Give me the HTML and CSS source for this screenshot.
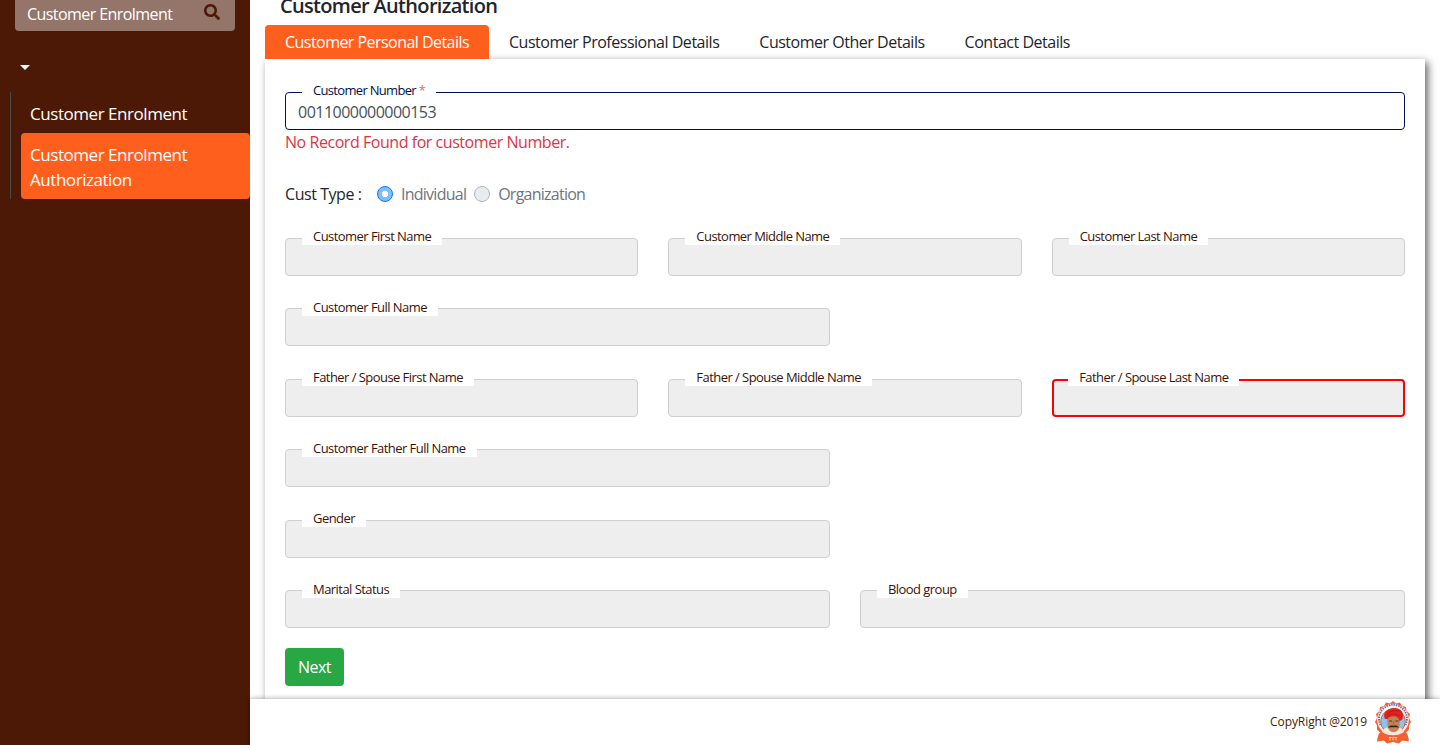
FILE: index.html
```
<!DOCTYPE html>
<html lang="en">
<head>
<meta charset="utf-8">
<title>Customer Authorization</title>
<link rel="stylesheet" href="styles.css">
</head>
<body>
<div class="app">
  <aside class="sidebar">
    <div class="search">
      <span class="search-text">Customer Enrolment</span>
      <svg class="search-icon" viewBox="0 0 512 512"><path d="M505 442.700L405.300 343c-4.500-4.500-10.600-7-17-7H372c27.600-35.300 44-79.700 44-128C416 93.100 322.900 0 208 0S0 93.100 0 208s93.100 208 208 208c48.300 0 92.700-16.400 128-44v16.300c0 6.400 2.500 12.500 7 17l99.700 99.700c9.400 9.400 24.600 9.400 33.900 0l28.300-28.300c9.400-9.400 9.400-24.600.1-34zM208 336c-70.700 0-128-57.200-128-128 0-70.700 57.200-128 128-128 70.700 0 128 57.200 128 128 0 70.700-57.200 128-128 128z"/></svg>
    </div>
    <div class="caret"></div>
    <nav class="menu">
      <a class="menu-item">Customer Enrolment</a>
      <a class="menu-item active">Customer Enrolment Authorization</a>
    </nav>
  </aside>
  <div class="main">
    <main class="content">
      <h5 class="title">Customer Authorization</h5>
      <div class="tabs">
        <a class="tab active"><span>Customer Personal Details</span></a>
        <a class="tab"><span>Customer Professional Details</span></a>
        <a class="tab"><span>Customer Other Details</span></a>
        <a class="tab"><span>Contact Details</span></a>
      </div>
      <section class="card">
        <div class="field number"><label>Customer Number <i class="req">*</i></label><span class="value">0011000000000153</span></div>
        <div class="error">No Record Found for customer Number.</div>
        <div class="types">
          <span class="types-label">Cust Type :</span>
          <span class="radio on"></span><span class="radio-text">Individual</span>
          <span class="radio"></span><span class="radio-text">Organization</span>
        </div>
        <div class="rows">
          <div class="row thirds">
            <div class="field"><label>Customer First Name</label></div>
            <div class="field"><label>Customer Middle Name</label></div>
            <div class="field"><label>Customer Last Name</label></div>
          </div>
          <div class="row halves"><div class="field"><label>Customer Full Name</label></div></div>
          <div class="row thirds">
            <div class="field"><label>Father / Spouse First Name</label></div>
            <div class="field"><label>Father / Spouse Middle Name</label></div>
            <div class="field invalid"><label>Father / Spouse Last Name</label></div>
          </div>
          <div class="row halves"><div class="field"><label>Customer Father Full Name</label></div></div>
          <div class="row halves"><div class="field"><label>Gender</label></div></div>
          <div class="row halves">
            <div class="field"><label>Marital Status</label></div>
            <div class="field"><label>Blood group</label></div>
          </div>
        </div>
        <button class="next">Next</button>
      </section>
    </main>
    <footer class="footer">
      <span class="copy">CopyRight @2019</span>
      <svg class="logo" viewBox="0 0 38 44">
        <path d="M19 1l3 2.500 4-1 2 3.500 4 1 .5 4 3.500 3-1 4 2 4-2 3.500 0 4-3 3 1 3 2 6-7-1-3 3-6-1.500-6 1.500-3-3-7 1 2-6 1-3-3-3 0-4-2-3.500 2-4-1-4 3.500-3 .5-4 4-1 2-3.500 4 1z" fill="#f4602e"/>
        <circle cx="19" cy="19.500" r="15.800" fill="#fff3ee"/>
        <path d="M6.500 25A14 14 0 1 1 31.500 25" fill="none" stroke="#6d70ae" stroke-width="1.900" stroke-dasharray="1.500 .9"/>
        <circle cx="19" cy="21.500" r="12.300" fill="#86c5ef" stroke="#ef5a2a"/>
        <path d="M8 32c1-4 5-5 11-5s10 1 11 5c-5 4-17 4-22 0z" fill="#f7e6dc"/>
        <path d="M13 16h13l-.5 11c-2 7-9.500 7-12 0z" fill="#c18459"/>
        <path d="M11 19c-3-6 2-11 9-11 8 0 11 6 8 12l-2.500 1c-1-6-9-6-12-2z" fill="#df251d"/>
        <path d="M12 15c4-4 8-5 14-4M13 17c4-4 8-4 13-1" fill="none" stroke="#b5171a" stroke-width=".8"/>
        <path d="M15 21h3m3.500 0h3" stroke="#4b2b1e" stroke-width=".9"/>
        <path d="M19.700 21v4" stroke="#a66439" stroke-width="1"/>
        <path d="M14 27.500c1.500-2 4-2.500 5.500-1.500 1.500-1 4-.5 5.500 1.500-2.500-.4-8-.4-11 0z" fill="#30211e"/>
        <path d="M5 33c3 2 6 2 9 2s4 1.500 5 1.500 2-1.500 5-1.500 6 0 9-2l2 7c-5-1-7 0-9 2l-7-1-7 1c-2-2-4-3-9-2z" fill="#f4602e"/>
        <path d="M15 37.500h8M16 37.500v3m3-3v3m3-3v3" stroke="#ffd4bd" stroke-width=".9"/>
      </svg>
    </footer>
  </div>
</div>
</body>
</html>
```
FILE: styles.css
```
* { box-sizing: border-box; }
body { margin: 0; font: 400 16px/24px "Open Sans", "Noto Sans", sans-serif; color: #212529; background: #fff; overflow: hidden; }
.app { display: flex; height: 745px; }
.sidebar { width: 250px; flex: none; background: #4b1905; color: #fff; }
.search { display: flex; align-items: center; justify-content: space-between; height: 38px; margin: -7px 15px 0; padding: 3px 15px 0 12px; border-radius: 4px; background: #94756a; font-size: 16px; letter-spacing: -.57px; white-space: nowrap; }
.search-icon { width: 16px; height: 16px; fill: #4b1905; margin-top: -3px; }
.caret { width: 0; margin: 34px 0 0 20px; border: 5px solid transparent; border-top-color: #fff; border-bottom: 0; }
.menu { margin: 22px 0 0 10px; padding-left: 10px; border-left: 1px solid #4b4b4b; font-size: 17px; line-height: 25px; letter-spacing: -.45px; }
.menu-item { display: block; padding: 9px 50px 7px 9px; white-space: nowrap; }
.menu-item.active { padding: 9px 40px 7px 9px; border-radius: 4px; background: #ff5f1d; white-space: normal; }
.main { flex: 1; display: flex; flex-direction: column; min-width: 0; }
.content { flex: 1; min-height: 0; overflow: hidden; padding: 0 15px; }
.title { margin: -6px 0 0 15px; font-size: 20px; line-height: 24px; font-weight: 600; letter-spacing: -.68px; }
.tabs { display: flex; height: 34px; margin-top: 7px; font-size: 16px; line-height: 35px; letter-spacing: -.48px; }
.tab { padding: 0 20px; white-space: nowrap; }
.tab.active { width: 224px; background: #ff5f1d; color: #fff; letter-spacing: -.54px; border-radius: 4px 4px 0 0; }
.card { height: 700px; padding: 33px 20px 0; background: #fff; box-shadow: 3px 3px 8px rgba(0,0,0,.6); }
.field { position: relative; height: 38px; border: 1px solid #cfcfcf; border-radius: 4px; background: #eee; }
.field label { position: absolute; left: 16px; top: -10.400px; padding: 0 11px; background: #fff; color: #3d1105; font-size: 13px; line-height: 17px; letter-spacing: -.55px; white-space: nowrap; }
.field.invalid { border: 2px solid #f00; }
.field.invalid label { left: 14.500px; top: -11.400px; }
.field.number { display: flex; align-items: center; padding: 0 12px; border-color: #00104d; background: #fff; }
.field.number label { top: -11px; color: #00104d; letter-spacing: -.68px; }
.req { color: #f06666; font-style: normal; }
.value { margin-top: 1px; color: #495057; letter-spacing: -.52px; }
.error { color: #dc3545; letter-spacing: -.45px; }
.types { display: flex; align-items: center; margin-top: 28px; letter-spacing: -.75px; }
.types-label { width: 92px; letter-spacing: -.45px; }
.radio { width: 16px; height: 16px; border: 1px solid #adb5bd; border-radius: 50%; background: #e9ecef; }
.radio.on { border-color: #007bff; background: radial-gradient(#fff 0 3px, #80bdff 3.500px); }
.radio-text { margin: 0 8px; color: #6c757d; }
.rows { display: grid; row-gap: 32.450px; margin-top: 31.800px; }
.row { display: grid; column-gap: 30px; }
.thirds { grid-template-columns: repeat(3, 1fr); }
.halves { grid-template-columns: repeat(2, 1fr); }
.next { display: block; width: 59px; height: 38px; margin-top: 20px; padding: 0; border: 0; border-radius: 4px; background: #28a745; color: #fff; font: 400 16px/38px "Open Sans", "Noto Sans", sans-serif; letter-spacing: -.5px; }
.footer { position: relative; display: flex; align-items: center; justify-content: flex-end; height: 46px; padding-right: 28px; background: #fff; box-shadow: 0 0 5px rgba(0,0,0,.4); }
.copy { font-size: 12px; color: #4b1905; letter-spacing: -.07px; }
.logo { width: 38px; height: 44px; margin-left: 7px; }
```
